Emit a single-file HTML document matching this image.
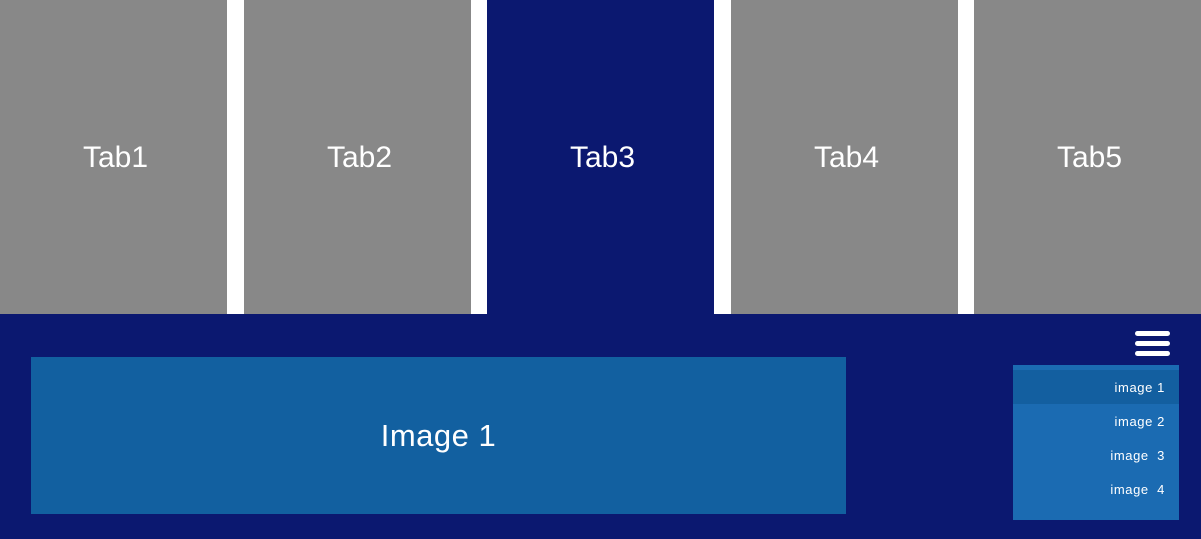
<!DOCTYPE html><html><head><style>
body{margin:0;width:1201px;height:539px;background:#fff;position:relative;overflow:hidden;font-family:"Liberation Sans",sans-serif;color:#fff}
.t{position:absolute;top:0;height:314px;width:227px;background:#888;display:flex;align-items:center;justify-content:center;font-size:30px;padding-left:4px;box-sizing:border-box;padding-top:2px}
.nav{position:absolute;left:0;top:314px;width:1201px;height:225px;background:#0b1870}
.img{position:absolute;left:31px;top:357px;width:815px;height:157px;background:#1260a0;display:flex;align-items:center;justify-content:center;font-size:31px;letter-spacing:.5px}
.bar{position:absolute;left:1135px;width:35px;height:5px;border-radius:3px;background:#fff}
.menu{position:absolute;left:1013px;top:365px;width:166px;height:155px;background:#1b6bb2}
.r{position:absolute;right:14px;font-size:13px;letter-spacing:.6px}
</style></head><body>
<div class="t" style="left:0">Tab1</div>
<div class="t" style="left:244px">Tab2</div>
<div class="t" style="left:487px;background:#0b1870">Tab3</div>
<div class="t" style="left:731px">Tab4</div>
<div class="t" style="left:974px">Tab5</div>
<div class="nav"></div>
<div class="img">Image 1</div>
<div class="bar" style="top:331px"></div><div class="bar" style="top:341px"></div><div class="bar" style="top:351px"></div>
<div class="menu">
<div style="position:absolute;left:0;top:5px;width:166px;height:34px;background:#135fa0"></div>
<div class="r" style="top:15px">image 1</div>
<div class="r" style="top:49px">image 2</div>
<div class="r" style="top:83px">image&nbsp; 3</div>
<div class="r" style="top:117px">image&nbsp; 4</div>
</div>
</body></html>
